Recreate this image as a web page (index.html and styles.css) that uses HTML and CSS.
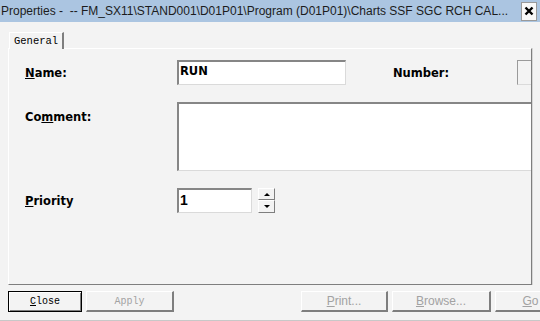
FILE: index.html
```html
<!DOCTYPE html>
<html lang="en">
<head>
    <meta charset="UTF-8">
    <title>Properties</title>
    <link rel="stylesheet" href="styles.css">
</head>
<body>
    <!-- Title bar -->
    <div class="titlebar">
        <span class="title">Properties -&nbsp; -- FM_SX11\STAND001\D01P01\Program (D01P01)\Charts SSF SGC RCH CAL...</span>
        <button class="close-x">
            <svg width="10" height="10" viewBox="0 0 10 10"><path d="M1.5 1.5 L8.5 8.5 M8.5 1.5 L1.5 8.5" stroke="#000" stroke-width="2.4"/></svg>
        </button>
    </div>

    <!-- Tabs -->
    <div class="tabs">
        <div class="tab">General</div>
    </div>

    <div class="panel">
        <div class="row row-name">
            <label class="label"><u>N</u>ame:</label>
            <div class="field name-field">RUN</div>
            <label class="label number-label">Number:</label>
            <div class="field number-field"></div>
        </div>

        <div class="row row-comment">
            <label class="label comment-label">Co<u>m</u>ment:</label>
            <div class="field comment-field"></div>
        </div>

        <div class="row row-priority">
            <label class="label"><u>P</u>riority</label>
            <div class="field priority-field">1</div>
            <div class="spin">
                <div class="spin-btn spin-up"><span class="arrow-up"></span></div>
                <div class="spin-btn spin-down"><span class="arrow-down"></span></div>
            </div>
        </div>
    </div>

    <!-- Dialog buttons -->
    <div class="buttons">
        <button class="btn btn-default close-btn"><u>C</u>lose</button>
        <button class="btn mono disabled apply-btn">Apply</button>
        <button class="btn disabled print-btn"><u>P</u>rint...</button>
        <button class="btn disabled browse-btn"><u>B</u>rowse...</button>
        <button class="btn disabled go-btn"><u>G</u>o</button>
    </div>
    <div class="bottom-line"></div>
</body>
</html>
```

FILE: styles.css
```css
body {
    margin: 0;
    width: 540px;
    height: 321px;
    overflow: hidden;
    background-color: #f3f3f3;
    font-family: "DejaVu Sans", sans-serif;
}

.titlebar {
    height: 22px;
    background-color: #abc5e1;
    display: flex;
    align-items: center;
    padding-left: 1px;
}
.title {
    font-family: "Liberation Sans", Arial, sans-serif;
    font-size: 12px;
    color: #1c1c1c;
    white-space: nowrap;
    overflow: hidden;
    width: 519px;
}
.close-x {
    margin-left: 1px;
    width: 16px;
    height: 19px;
    padding: 0;
    background: #f8f8f8;
    border: 1px solid #9a9a9a;
    display: flex;
    align-items: center;
    justify-content: center;
}

.tabs {
    height: 17px;
    padding-top: 10px;
    padding-left: 9px;
    position: relative;
    z-index: 1;
    margin-bottom: -1px;
}
.tab {
    width: 55px;
    height: 17px;
    box-sizing: border-box;
    border-top: 1px solid #fff;
    border-left: 1px solid #fff;
    border-right: 2px solid #7e7e7e;
    background-color: #f3f3f3;
    font-family: "Liberation Mono", monospace;
    font-size: 10.5px;
    line-height: 16px;
    padding-left: 4px;
    color: #000;
}

.panel {
    margin-left: 8px;
    width: 524px;
    height: 237px;
    box-sizing: border-box;
    border-top: 1px solid #fff;
    border-left: 1px solid #fff;
    border-right: 1px solid #7e7e7e;
    border-bottom: 1px solid #7e7e7e;
    box-shadow: 1px 0 0 #d6d6d6;
    padding: 11px 0 0 16px;
    overflow: hidden;
}

.row {
    display: flex;
    align-items: center;
}
.row-comment {
    align-items: flex-start;
    margin-top: 17px;
}
.row-priority {
    margin-top: 17px;
}

.label {
    width: 152px;
    flex-shrink: 0;
    font-weight: bold;
    font-size: 11.5px;
    color: #000;
    padding-top: 1px;
}
.comment-label {
    padding-top: 8px;
}
.number-label {
    margin-left: 47px;
    width: 124px;
}

.field {
    box-sizing: border-box;
    height: 25px;
    background-color: #fff;
    border-top: 2px solid #868686;
    border-left: 2px solid #868686;
    border-right: 1px solid #dadada;
    border-bottom: 1px solid #dadada;
    font-weight: bold;
    font-size: 11.5px;
    line-height: 19px;
    padding-left: 1px;
    flex-shrink: 0;
}
.name-field {
    width: 169px;
}
.number-field {
    width: 60px;
    background-color: #f3f3f3;
    border-top-color: #9a9a9a;
    border-left-color: #9a9a9a;
    border-top-width: 1px;
    border-left-width: 1px;
}
.comment-field {
    width: 360px;
    height: 69px;
}
.priority-field {
    width: 75px;
    font-family: "Liberation Sans", Arial, sans-serif;
    font-size: 14px;
    line-height: 21px;
}

.spin {
    margin-left: 6px;
    width: 17px;
    display: flex;
    flex-direction: column;
    align-self: flex-start;
}
.spin-btn {
    box-sizing: border-box;
    background-color: #f3f3f3;
    border-top: 1px solid #fff;
    border-left: 1px solid #fff;
    border-right: 1px solid #7e7e7e;
    border-bottom: 1px solid #7e7e7e;
    display: flex;
    align-items: center;
    justify-content: center;
}
.spin-up {
    height: 12px;
}
.spin-down {
    height: 13px;
}
.arrow-up {
    width: 0;
    height: 0;
    border-left: 3px solid transparent;
    border-right: 3px solid transparent;
    border-bottom: 3px solid #000;
}
.arrow-down {
    width: 0;
    height: 0;
    border-left: 3px solid transparent;
    border-right: 3px solid transparent;
    border-top: 3px solid #000;
}

.buttons {
    display: flex;
    gap: 4px;
    padding-left: 8px;
    margin-top: 6px;
    height: 21px;
    white-space: nowrap;
}
.btn {
    box-sizing: border-box;
    height: 21px;
    padding: 0;
    background-color: #f3f3f3;
    border-top: 1px solid #fff;
    border-left: 1px solid #fff;
    border-right: 2px solid #7e7e7e;
    border-bottom: 2px solid #7e7e7e;
    font-family: "Liberation Sans", Arial, sans-serif;
    font-size: 12px;
    color: #000;
    flex-shrink: 0;
}
.btn-default {
    border: 1px solid #000;
    box-shadow: inset 1px 1px #fff, inset -1px -1px #7e7e7e;
    font-family: "Liberation Mono", monospace;
    font-size: 10px;
}
.mono {
    font-family: "Liberation Mono", monospace;
    font-size: 10px;
}
.disabled {
    color: #a2a2a2;
}
.close-btn {
    width: 74px;
}
.apply-btn {
    width: 88px;
}
.print-btn {
    width: 87px;
    margin-left: 123px;
}
.browse-btn {
    width: 99px;
}
.go-btn {
    width: 72px;
}

.bottom-line {
    margin-top: 8px;
    border-top: 1px solid #c8c8c8;
}
```
